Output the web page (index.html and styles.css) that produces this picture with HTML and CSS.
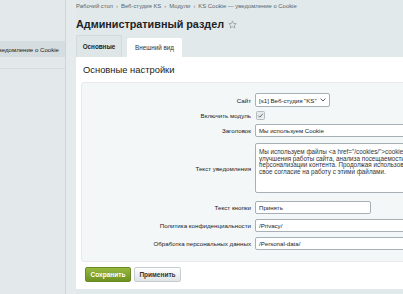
FILE: index.html
```html
<!DOCTYPE html>
<html lang="ru">
<head>
<meta charset="utf-8">
<title>Административный раздел</title>
<link rel="stylesheet" href="styles.css">
</head>
<body>
<div class="layout">
  <aside class="sidebar">
    <div class="menu-item active"><span>Уведомление о Cookie</span></div>
    <div class="menu-item"></div>
  </aside>
  <div class="gutter"></div>
  <main class="main">
    <nav class="crumbs">
      <span>Рабочий стол</span><span class="sep">›</span>
      <span>Веб-студия KS</span><span class="sep">›</span>
      <span>Модули</span><span class="sep">›</span>
      <span>KS Cookie — уведомление о Cookie</span>
    </nav>
    <div class="title-row">
      <h1 class="title">Административный раздел</h1>
      <svg class="star" width="9" height="9" viewBox="0 0 24 24"><path d="M12 2.5l2.9 6.6 7.1.6-5.4 4.7 1.6 7-6.2-3.7-6.2 3.7 1.6-7L2 9.7l7.1-.6z" fill="none" stroke="#8a969b" stroke-width="1.9" stroke-linejoin="round"/></svg>
    </div>
    <div class="tabs">
      <div class="tab tab-active">Основные</div>
      <div class="tab tab-plain">Внешний вид</div>
    </div>
    <section class="panel">
      <h2 class="panel-title">Основные настройки</h2>
      <div class="form-box">
        <div class="row">
          <label class="label">Сайт</label>
          <div class="select">[s1] Веб-студия "KS" <svg width="6" height="4" viewBox="0 0 6 4"><path d="M0.6 0.6L3 3l2.4-2.4" fill="none" stroke="#444" stroke-width="0.9"/></svg></div>
        </div>
        <div class="row row-check">
          <label class="label">Включить модуль</label>
          <div class="checkbox"><svg width="7" height="7" viewBox="0 0 8 8"><path d="M1.5 4.2l1.7 1.7 3.4-3.8" fill="none" stroke="#666" stroke-width="1.1"/></svg></div>
        </div>
        <div class="row">
          <label class="label">Заголовок</label>
          <div class="input wide">Мы используем Cookie</div>
        </div>
        <div class="row row-area">
          <label class="label">Текст уведомления</label>
          <div class="textarea">Мы используем файлы &lt;a href="/cookies/"&gt;cookie&lt;/a&gt; для
улучшения работы сайта, анализа посещаемости и
персонализации контента. Продолжая использовать сайт, вы даете
свое согласие на работу с этими файлами.</div>
        </div>
        <div class="row row-after-area">
          <label class="label">Текст кнопки</label>
          <div class="input short">Принять</div>
        </div>
        <div class="row">
          <label class="label">Политика конфиденциальности</label>
          <div class="input wide">/Privacy/</div>
        </div>
        <div class="row">
          <label class="label">Обработка персональных данных</label>
          <div class="input wide">/Personal-data/</div>
        </div>
      </div>
      <div class="buttons">
        <button class="btn btn-save">Сохранить</button>
        <button class="btn btn-apply">Применить</button>
      </div>
    </section>
  </main>
</div>
</body>
</html>
```
FILE: styles.css
```css
html, body {
  margin: 0;
  padding: 0;
  overflow: hidden;
}
body {
  background: #e2e9eb;
  font-family: "Liberation Sans", Arial, sans-serif;
  color: #222;
  width: 403px;
  height: 294px;
}
.layout {
  display: flex;
  height: 294px;
}
.sidebar {
  flex: none;
  width: 65px;
  background: #e3e9eb;
  border-right: 1px solid #cdd5d8;
  padding-top: 41px;
  overflow: hidden;
}
.menu-item {
  display: flex;
  justify-content: flex-end;
  align-items: center;
  height: 16px;
  padding-right: 6px;
  font-size: 6.1px;
  color: #222;
  white-space: nowrap;
}
.menu-item.active {
  background: #d5dde0;
}
.menu-item + .menu-item {
  height: 11px;
  border-bottom: 1px solid #d4dcdf;
}
.gutter {
  flex: none;
  width: 10px;
  background: #e5ebed;
}
.main {
  flex: none;
  width: 420px;
  display: flex;
  flex-direction: column;
}
.crumbs {
  display: flex;
  gap: 3px;
  font-size: 5.9px;
  color: #56656b;
  padding-top: 3px;
  height: 8px;
  white-space: nowrap;
}
.crumbs .sep {
  color: #7a878c;
}
.title-row {
  display: flex;
  align-items: center;
  gap: 4px;
  height: 23px;
  margin-top: 1px;
}
.title {
  margin: 0;
  font-size: 10.8px;
  font-weight: bold;
  color: #1c2326;
}
.star {
  margin-top: 1px;
}
.tabs {
  display: flex;
  align-items: flex-end;
  gap: 5px;
  height: 22px;
}
.tab {
  font-size: 6.3px;
  display: flex;
  align-items: center;
  justify-content: center;
  border-radius: 2px 2px 0 0;
}
.tab-active {
  width: 44px;
  height: 21px;
  background: #dfe6e8;
  font-weight: bold;
  color: #222;
  border: 1px solid #d2dadd;
  border-bottom: none;
}
.tab-plain {
  width: 55px;
  height: 19px;
  background: #fff;
  color: #333;
}
.panel {
  background: #fff;
  padding: 6px 0 7px 5px;
}
.panel-title {
  margin: 0 0 0 2px;
  font-size: 9.4px;
  font-weight: normal;
  color: #222;
  height: 19px;
  line-height: 14px;
}
.form-box {
  background: #f4f7f8;
  border: 1px solid #e5eaeb;
  border-radius: 3px;
  padding: 10px 0 11px 0;
  display: flex;
  flex-direction: column;
  gap: 5px;
}
.row {
  display: flex;
  align-items: center;
  gap: 4px;
}
.row-check {
  margin-top: -1px;
  margin-bottom: -1px;
}
.row-area {
  margin-top: 1px;
}
.row-after-area {
  margin-top: 3px;
}
.label {
  flex: none;
  width: 169px;
  text-align: right;
  font-size: 6.2px;
  color: #222;
  white-space: nowrap;
}
.select {
  display: flex;
  align-items: center;
  gap: 3px;
  height: 12px;
  padding: 0 3px 0 3px;
  border: 1px solid #a7b1b5;
  border-radius: 2px;
  background: #fff;
  font-size: 6.1px;
  white-space: nowrap;
}
.checkbox {
  width: 7px;
  height: 7px;
  border: 1px solid #b3bcbf;
  border-radius: 1.5px;
  background: #e6eaeb;
  display: flex;
  align-items: center;
  justify-content: center;
  margin-left: 1px;
}
.input, .textarea {
  border: 1px solid #a7b1b5;
  border-radius: 2px;
  background: #fff;
  color: #222;
  box-sizing: border-box;
}
.input {
  height: 13px;
  display: flex;
  align-items: center;
  padding-left: 3px;
  white-space: nowrap;
  font-size: 6.1px;
}
.input.wide {
  width: 230px;
}
.input.short {
  width: 116px;
}
.textarea {
  width: 230px;
  height: 50px;
  padding: 5px 5px 4px 3px;
  font-size: 6.3px;
  line-height: 6.5px;
  color: #333;
  white-space: pre-line;
}
.buttons {
  display: flex;
  gap: 3px;
  padding: 5px 0 0 4px;
}
.btn {
  height: 15px;
  border-radius: 2px;
  font-family: "Liberation Sans", Arial, sans-serif;
  font-size: 6.5px;
  font-weight: bold;
  padding: 0;
  cursor: pointer;
}
.btn-save {
  width: 46px;
  color: #fff;
  background: linear-gradient(#97b83f, #6f9121);
  border: 1px solid #6a8a22;
}
.btn-apply {
  width: 47px;
  color: #333;
  background: linear-gradient(#ffffff, #dfe4e6);
  border: 1px solid #c5cdd0;
}
```
